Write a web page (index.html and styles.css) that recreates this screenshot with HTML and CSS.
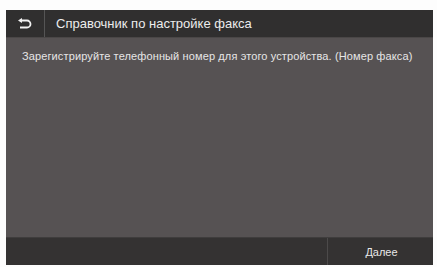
FILE: index.html
```html
<!DOCTYPE html>
<html lang="ru">
<head>
<meta charset="utf-8">
<link rel="stylesheet" href="styles.css">
</head>
<body>
<div class="screen">
  <div class="header">
    <div class="back">
      <svg width="16" height="12" viewBox="0 0 16 12"><path d="M3 2.5 H10 A3.5 3.5 0 0 1 10 9.5 H3" fill="none" stroke="#f2f2f2" stroke-width="1.8"/><path d="M1 2.5 L5 0 L5 5 Z" fill="#f2f2f2"/></svg>
    </div>
    <div class="title">Справочник по настройке факса</div>
  </div>
  <div class="content">
    <p class="msg">Зарегистрируйте телефонный номер для этого устройства. (Номер факса)</p>
  </div>
  <div class="footer">
    <div class="spacer"></div>
    <div class="next">Далее</div>
  </div>
</div>
</body>
</html>
```
FILE: styles.css
```css
html, body { margin: 0; padding: 0; background: #fdfdfd; }
body { padding: 10px 4px 2px 6px; font-family: "Liberation Sans Narrow", "Liberation Sans", sans-serif; }
.screen { width: 427px; height: 255px; display: flex; flex-direction: column; background: #565253; }
.header { height: 28px; background: #302f2f; display: flex; align-items: stretch; border-bottom: 1px solid #4a4747; box-sizing: border-box; }
.back { width: 38px; border-right: 1px solid #555; display: flex; align-items: center; justify-content: center; }
.title { color: #ececec; font-size: 13px; display: flex; align-items: center; padding-left: 11px; }
.content { flex: 1; padding: 12px 16px; }
.msg { margin: 0; color: #e6e6e6; font-size: 11px; letter-spacing: 0.12px; }
.footer { height: 28px; background: #343232; display: flex; border-top: 1px solid #3f3d3d; box-sizing: border-box; }
.spacer { flex: 1; border-right: 1px solid #4c4a4a; }
.next { width: 105px; color: #e8e8e8; font-size: 11px; display: flex; align-items: center; justify-content: center; padding-left: 2px; box-sizing: border-box; }
```
